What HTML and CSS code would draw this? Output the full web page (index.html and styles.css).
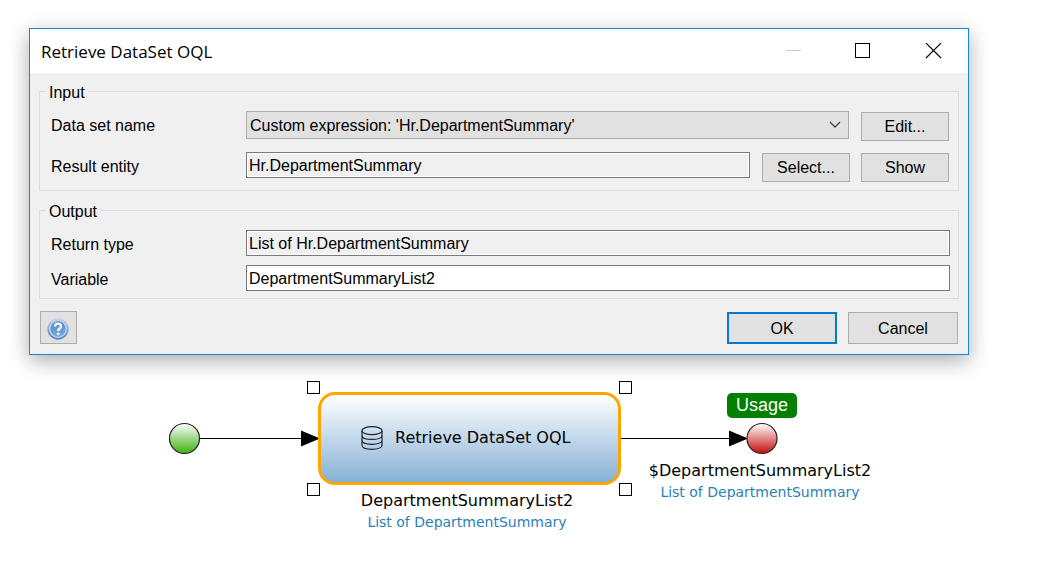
FILE: index.html
```html
<!DOCTYPE html>
<html lang="en">
<head>
<meta charset="utf-8">
<title>Retrieve DataSet OQL</title>
<link rel="stylesheet" href="styles.css">
</head>
<body>
<form class="dialog" role="dialog" aria-labelledby="dialog-title">
  <header class="titlebar">
    <h1 class="title" id="dialog-title">Retrieve DataSet OQL</h1>
    <button class="chrome" type="button" aria-label="Minimize" disabled>
      <svg width="17" height="17" viewBox="0 0 17 17"><path d="M1 7.500H16" stroke="#c8c8c8"/></svg>
    </button>
    <button class="chrome" type="button" aria-label="Maximize">
      <svg width="17" height="17" viewBox="0 0 17 17"><rect x="0.500" y="0.500" width="14" height="14" fill="none" stroke="#000"/></svg>
    </button>
    <button class="chrome" type="button" aria-label="Close">
      <svg width="17" height="17" viewBox="0 0 17 17"><path d="M1 0L16 15M16 0L1 15" stroke="#000" stroke-width="1.1"/></svg>
    </button>
  </header>
  <div class="content">
    <fieldset class="group input-group">
      <legend>Input</legend>
      <div class="row">
        <label for="dataset">Data set name</label>
        <div class="select-wrap">
          <select id="dataset"><option>Custom expression: 'Hr.DepartmentSummary'</option></select>
          <svg class="chevron" width="12" height="7" viewBox="0 0 12 7"><path d="M1 1L6 6L11 1" fill="none" stroke="#444" stroke-width="1.3"/></svg>
        </div>
        <button class="button small" type="button">Edit...</button>
      </div>
      <div class="row">
        <label for="entity">Result entity</label>
        <input class="field" id="entity" value="Hr.DepartmentSummary" readonly>
        <div class="button-pair">
          <button class="button small" type="button">Select...</button>
          <button class="button small" type="button">Show</button>
        </div>
      </div>
    </fieldset>
    <fieldset class="group output-group">
      <legend>Output</legend>
      <div class="row">
        <label for="return-type">Return type</label>
        <input class="field" id="return-type" value="List of Hr.DepartmentSummary" readonly>
      </div>
      <div class="row">
        <label for="variable">Variable</label>
        <input class="field" id="variable" value="DepartmentSummaryList2">
      </div>
    </fieldset>
    <footer class="actions">
      <button class="button help" type="button" aria-label="Help">
        <svg width="22" height="22" viewBox="0 0 22 22">
          <defs>
            <linearGradient id="help-ring" x2="0" y2="1"><stop offset="0" stop-color="#c6d7ef"/><stop offset="1" stop-color="#4f83bf"/></linearGradient>
            <linearGradient id="help-core" x2="0" y2="1"><stop offset="0" stop-color="#5b8ac6"/><stop offset="1" stop-color="#7aa9da"/></linearGradient>
          </defs>
          <circle cx="11" cy="11" r="10.700" fill="url(#help-ring)"/>
          <circle cx="11" cy="11" r="8.300" fill="url(#help-core)" stroke="#c0d5ee" stroke-width="1.300"/>
          <path d="M8 8.600C8 4.700 14.200 4.800 14 8.500C13.900 10.600 11.200 10.500 11.200 13" fill="none" stroke="#f4f8fd" stroke-width="2.300"/>
          <circle cx="11.200" cy="15.800" r="1.400" fill="#f4f8fd"/>
        </svg>
      </button>
      <button class="button large default" type="submit">OK</button>
      <button class="button large" type="button">Cancel</button>
    </footer>
  </div>
</form>

<main class="canvas">
  <svg class="flow" width="800" height="150" viewBox="0 0 800 150">
    <defs>
      <linearGradient id="start" x2="0" y2="1"><stop offset="0" stop-color="#fff"/><stop offset="1" stop-color="#3cb010"/></linearGradient>
      <linearGradient id="end" x2="0" y2="1"><stop offset="0" stop-color="#fff"/><stop offset="1" stop-color="#c60c0c"/></linearGradient>
    </defs>
    <path d="M200 83.500H302M620 83.500H730" stroke="#000"/>
    <path d="M301 75.500L320 83.500L301 91.500ZM729 75.500L748 83.500L729 91.500Z"/>
    <circle cx="184.500" cy="83.500" r="15" fill="url(#start)" stroke="#222" stroke-width="1.200"/>
    <circle cx="762" cy="83.500" r="15" fill="url(#end)" stroke="#222" stroke-width="1.200"/>
  </svg>
  <section class="activity">
    <svg width="22" height="24" viewBox="0 0 22 24" fill="none" stroke="#1b242c" stroke-width="1.200">
      <ellipse cx="11" cy="4.700" rx="10" ry="4"/>
      <path d="M1 4.700V19.300C1 24.600 21 24.600 21 19.300V4.700M1 9.400C1 14.700 21 14.700 21 9.400M1 14.300C1 19.600 21 19.600 21 14.300"/>
    </svg>
    <span>Retrieve DataSet OQL</span>
  </section>
  <i class="handle top-left"></i>
  <i class="handle top-right"></i>
  <i class="handle bottom-left"></i>
  <i class="handle bottom-right"></i>
  <div class="caption activity-caption">
    <div>DepartmentSummaryList2</div>
    <div class="type">List of DepartmentSummary</div>
  </div>
  <div class="usage">Usage</div>
  <div class="caption end-caption">
    <div>$DepartmentSummaryList2</div>
    <div class="type">List of DepartmentSummary</div>
  </div>
</main>
</body>
</html>
```
FILE: styles.css
```css
* { box-sizing: border-box; }

body {
  margin: 0;
  padding: 28px 80px 0 29px;
  background: #fff;
  color: #000;
  font: 16px/19px "Liberation Sans", Arial, sans-serif;
}

button, input, select { margin: 0; font: inherit; color: inherit; }
svg { display: block; }

.dialog {
  background: #f0f0f0;
  border: 1px solid #1883d7;
  box-shadow: 0 6px 20px rgba(0, 0, 0, 0.33);
}

.titlebar {
  display: flex;
  align-items: center;
  height: 44px;
  padding-left: 11px;
  background: #fff;
}
.title {
  flex: 1;
  margin: 0;
  padding-top: 2px;
  font: 17px/24px "Open Sans", "Noto Sans", sans-serif;
}
.chrome {
  display: grid;
  place-items: center;
  width: 70px;
  height: 44px;
  padding: 0;
  border: 0;
  background: none;
}

.content { padding: 8px 9px 10px; }

.group {
  min-width: 0;
  margin: 0 0 9px;
  border: 1px solid #dcdcdc;
}
.group legend { margin-left: -5px; padding: 2px 3px 0; }
.input-group { padding: 9px 9px 8px 11px; }
.output-group { margin-bottom: 12px; padding: 9px 8px 7px 11px; }

.row { display: flex; gap: 12px; }
.input-group .row + .row { margin-top: 11px; }
.output-group .row + .row { margin-top: 9px; }
.row label { width: 183px; padding-top: 5px; }

.field {
  flex: 1;
  min-width: 0;
  height: 26px;
  padding: 2px 2px 0;
  border: 1px solid #7a7a7a;
  border-radius: 0;
  background: #fff;
}
.field:read-only { background: #f0f0f0; box-shadow: inset 0 0 0 1px #fff; }

.select-wrap { position: relative; flex: 1; }
.select-wrap select {
  width: 100%;
  height: 28px;
  padding: 0 24px 0 3px;
  border: 1px solid #adadad;
  border-radius: 0;
  background: #e1e1e1;
  appearance: none;
}
.chevron { position: absolute; top: 10px; right: 8px; pointer-events: none; }

.button {
  padding: 0;
  border: 1px solid #adadad;
  background: #e1e1e1;
}
.small { width: 88px; height: 29px; margin-top: 1px; }
.button-pair { display: flex; gap: 11px; }

.actions { display: flex; align-items: flex-end; gap: 11px; padding: 0 1px; }
.help {
  display: grid;
  place-items: center;
  width: 37px;
  height: 33px;
  margin-right: auto;
  padding: 2px 1px 0 0;
}
.large { width: 110px; height: 32px; }
.default { border: 2px solid #0078d7; }

.canvas {
  position: relative;
  min-height: 200px;
  margin-left: -29px;
  font: 16px/20px Verdana, "DejaVu Sans", sans-serif;
  z-index: -1;
}
.flow { position: absolute; top: 0; left: 0; }
.activity {
  position: absolute;
  top: 37px;
  left: 318px;
  display: flex;
  align-items: center;
  gap: 12px;
  width: 303px;
  height: 93px;
  padding: 0 0 2px 40px;
  border: 3px solid #ffa500;
  border-radius: 17px;
  background: linear-gradient(#fff, #86b0d4);
}
.handle {
  position: absolute;
  width: 13px;
  height: 13px;
  border: 1px solid #000;
  background: #fff;
}
.top-left { top: 26px; left: 307px; }
.top-right { top: 26px; left: 619px; }
.bottom-left { top: 128px; left: 307px; }
.bottom-right { top: 128px; left: 619px; }

.caption {
  position: absolute;
  width: 240px;
  text-align: center;
  white-space: nowrap;
}
.activity-caption { top: 136px; left: 347px; }
.end-caption { top: 106px; left: 640px; }
.type { padding-top: 1px; color: #2a7fb8; font-size: 14px; }

.usage {
  position: absolute;
  top: 38px;
  left: 727px;
  width: 70px;
  border-radius: 5px;
  background: #008000;
  color: #fff;
  font: 18px/25px "Liberation Sans", Arial, sans-serif;
  text-align: center;
}
```
